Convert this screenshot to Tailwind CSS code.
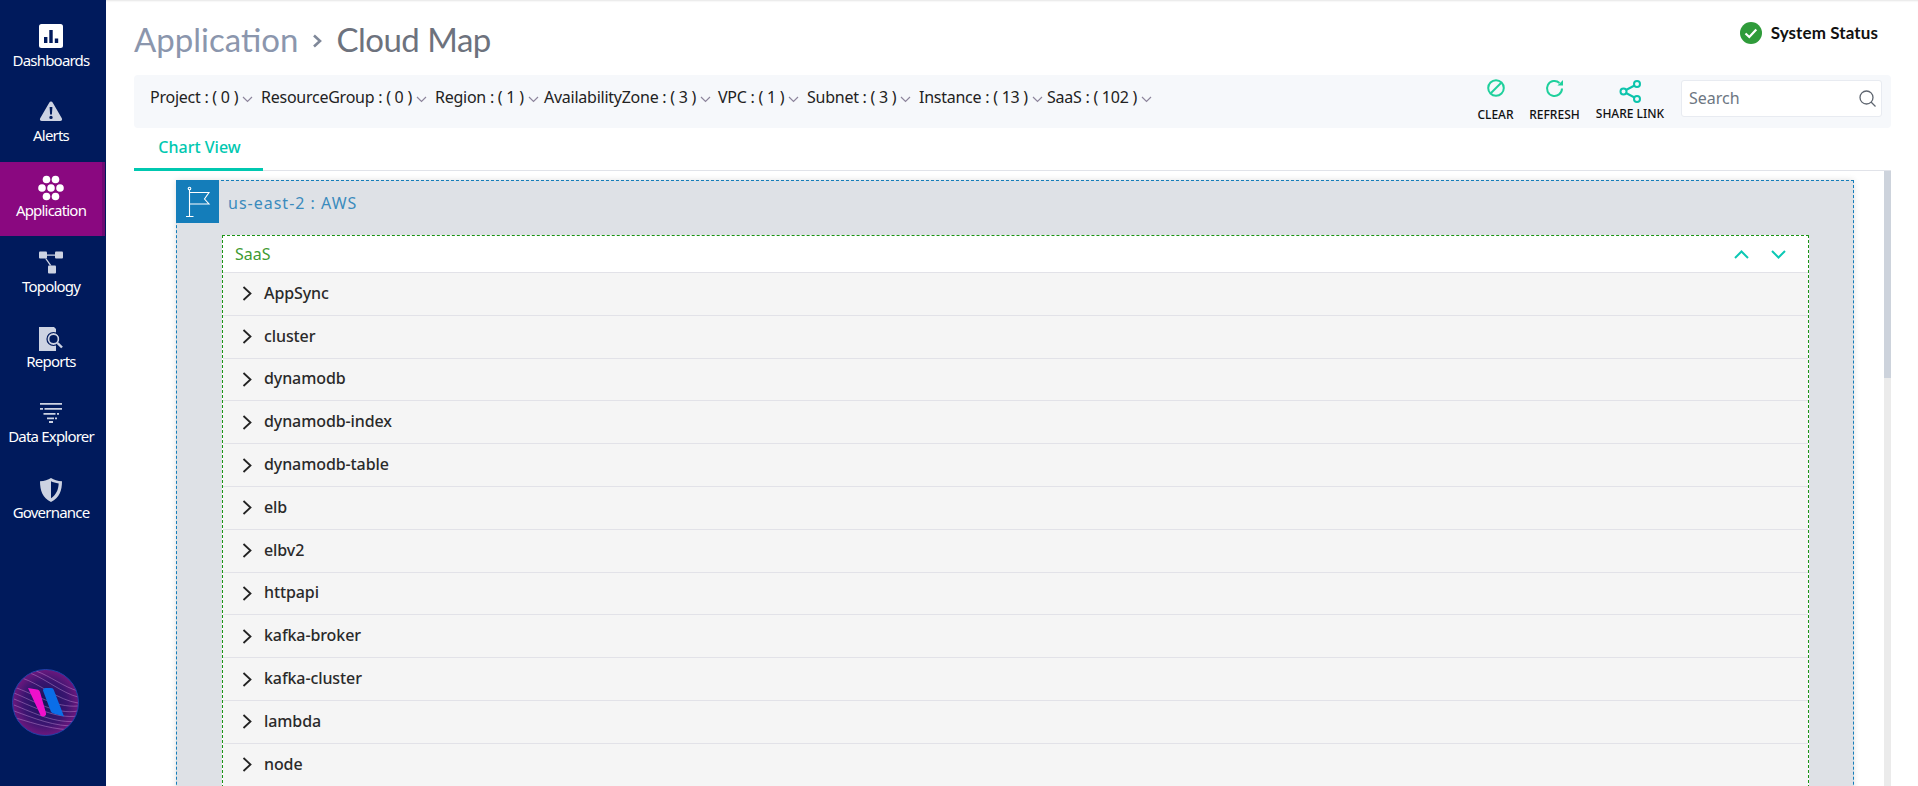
<!DOCTYPE html>
<html lang="en">
  <head>
    <meta charset="UTF-8" />
    <title>Cloud Map</title>
    <script src="https://cdn.jsdelivr.net/npm/@tailwindcss/browser@4"></script>
  </head>
  <body class="h-screen overflow-hidden bg-white font-['Noto_Sans',sans-serif] text-[#222]">
    <div class="flex h-[786px]">
      <!-- Sidebar -->
      <aside class="w-[106px] shrink-0 bg-[#001a5c] pt-[11px] flex flex-col text-white text-[15px] tracking-[-0.8px]">
        <a class="h-[75.4px] pr-[4px] flex flex-col items-center pt-[13px]">
          <svg class="w-6 h-6" viewBox="0 0 24 24"><rect width="24" height="24" rx="2.5" fill="#fff"/><path d="M5 13h3.400v6H5zM10.300 6h3.400v13h-3.400zM15.800 14.500h3.400V19h-3.400z" fill="#001a5c"/></svg>
          <span class="leading-[24px]">Dashboards</span>
        </a>
        <a class="h-[75.4px] pr-[4px] flex flex-col items-center pt-[13px]">
          <svg class="w-6 h-6" viewBox="0 0 24 24"><path d="M12 2.500c.8 0 1.300.4 1.800 1.200l9 15.500c.8 1.400-.1 2.800-1.600 2.800H2.800c-1.500 0-2.400-1.400-1.600-2.800l9-15.500c.5-.8 1-1.200 1.800-1.200z" fill="#cdd3e2"/><path d="M10.600 8h2.800l-.5 7.500h-1.800zM12 16.700a1.700 1.700 0 1 1 0 3.400 1.700 1.700 0 0 1 0-3.400z" fill="#001a5c"/></svg>
          <span class="leading-[24px]">Alerts</span>
        </a>
        <a class="h-[74px] mr-[1px] flex flex-col items-center pt-[13px] bg-[#8a0880] border-r-[3px] border-[#6e0a72]">
          <svg class="w-[26px] h-[26px]" viewBox="0 0 26 26" fill="#fff">
            <circle cx="8.500" cy="4.500" r="3.800"/><circle cx="17.500" cy="4.500" r="3.800"/>
            <circle cx="4" cy="13" r="3.800"/><circle cx="13" cy="13" r="3.800"/><circle cx="22" cy="13" r="3.800"/>
            <circle cx="8.500" cy="21.500" r="3.800"/><circle cx="17.500" cy="21.500" r="3.800"/>
          </svg>
          <span class="leading-[24px] -mt-[3px]">Application</span>
        </a>
        <a class="h-[75.400px] mt-[1.400px] pr-[4px] flex flex-col items-center pt-[14px]">
          <svg class="w-6 h-6" viewBox="0 0 24 24" fill="#cdd3e2"><rect y="0.500" width="8" height="7" rx="1"/><rect x="16" y="0.500" width="8" height="7" rx="1"/><rect x="9" y="14.500" width="8" height="8" rx="1"/><path d="M8 3.500h8v1.200H8zM6 7.500h1.500l5 7h-1.600z"/></svg>
          <span class="leading-[24px] -mt-[1px]">Topology</span>
        </a>
        <a class="h-[75.400px] pr-[4px] flex flex-col items-center pt-[14px]">
          <svg class="w-7 h-6 ml-[1px]" viewBox="0 0 28 24"><path d="M1 0h15l2 2v22H1z" fill="#cdd3e2"/><circle cx="15.500" cy="12" r="5.800" fill="#001a5c"/><circle cx="15.500" cy="12" r="5" fill="none" stroke="#cdd3e2" stroke-width="1.800"/><circle cx="15.500" cy="12" r="6.500" fill="none" stroke="#001a5c" stroke-width="1.200"/><path d="M19.500 16l4.500 4.500" stroke="#cdd3e2" stroke-width="2.400"/></svg>
          <span class="leading-[24px] -mt-[2px]">Reports</span>
        </a>
        <a class="h-[75.400px] pr-[4px] flex flex-col items-center pt-[15px]">
          <svg class="w-[22px] h-[20px]" viewBox="0 0 22 20" fill="#cdd3e2"><path d="M0 0h22v1.800H0zM0 5h3v1.800H0zM4.500 5H22v1.800H4.500zM3.500 10h12v1.800h-12zM17 10h2v1.800h-2zM7 14.500h7v1.800H7zM15 14.500h2v1.800h-2zM9 18h4v2H9z"/></svg>
          <span class="leading-[24px] mt-[1px]">Data Explorer</span>
        </a>
        <a class="h-[75.400px] pr-[4px] flex flex-col items-center pt-[15px]">
          <svg class="w-[22px] h-6" viewBox="0 0 22 24"><path d="M11 0c3 2 6.500 3 11 3.200 0 9-2.500 16.500-11 20.800C2.500 19.700 0 12.200 0 3.200 4.500 3 8 2 11 0z" fill="#cdd3e2"/><path d="M11 3.200c2 1 4.500 1.800 7.700 2.300-.3 6.500-2.700 11.500-7.700 14.700z" fill="#001a5c"/></svg>
          <span class="leading-[24px] -mt-[2px]">Governance</span>
        </a>
        <!-- Logo -->
        <div class="mt-auto mb-[50px] ml-[12px]">
          <svg class="w-[67px] h-[67px]" viewBox="0 0 67 67">
            <defs>
              <radialGradient id="lg" cx="0.500" cy="0.500" r="0.600"><stop offset="0" stop-color="#14145a"/><stop offset="0.550" stop-color="#3a1570"/><stop offset="1" stop-color="#8a1a86"/></radialGradient>
              <clipPath id="lc"><circle cx="33.500" cy="33.500" r="32.500"/></clipPath>
            </defs>
            <circle cx="33.500" cy="33.500" r="33" fill="url(#lg)" stroke="#2040a8" stroke-width="1"/>
            <g clip-path="url(#lc)" fill="none" stroke="#d7a8e8" stroke-opacity="0.550" stroke-width="0.700">
              <path d="M2 24c20 8 42 22 64 18M2 30c20 8 42 20 64 17M2 36c20 8 42 19 64 16M2 42c20 7 40 16 64 15M4 49c20 6 38 12 60 12M18 4c16 6 32 20 48 24M24 2c14 5 28 16 42 20M10 9c18 6 36 22 56 25M2 18c20 7 42 21 64 19"/>
            </g>
            <path d="M16 19l9 1.500c1.500.2 2.500 1 3 2.500l6 21c.5 2-1 3.500-3 3.500-1.500 0-2.500-.7-3-2.500z" fill="#ef10cb"/>
            <path d="M31 21.500c0-1.500 1-2.500 2.500-2.500h5.500c1.500 0 2.500.8 3 2.500l10 26-10.500-3c-1.500-.4-2.500-1.200-3-3z" fill="#0a6ee8"/>
          </svg>
        </div>
      </aside>

      <main class="flex-1 min-w-0 flex flex-col pl-[28px] pr-[27px] shadow-[inset_0_2px_2px_-1px_#e5e5e5]">
        <!-- Title row -->
        <div class="h-[75px] shrink-0 flex items-start justify-between">
          <h1 class="flex items-center mt-[18px] text-[33px] leading-[42px] font-['Lato',sans-serif] text-[#8b96ad]">
            <span>Application</span>
            <svg class="w-[10px] h-[14px] mx-[14px] mt-[3px]" viewBox="0 0 10 14" fill="none" stroke="#7f8899" stroke-width="2.600"><path d="M2 1.500L8 7l-6 5.500"/></svg>
            <span class="text-[#6d727d] tracking-[-0.5px]">Cloud Map</span>
          </h1>
          <div class="flex items-center gap-[9px] mt-[20px] mr-[13px]">
            <svg class="w-[22px] h-[22px]" viewBox="0 0 22 22"><circle cx="11" cy="11" r="11" fill="#2f9b3a"/><path d="M5.500 11.500l3.800 3.500 7-7.500" fill="none" stroke="#fff" stroke-width="2.200"/></svg>
            <span class="font-['Lato',sans-serif] font-bold text-[17px] tracking-[0.1px] text-[#111]">System Status</span>
          </div>
        </div>

        <!-- Filter bar -->
        <div class="h-[53px] shrink-0 bg-[#f6f8fb] rounded-[4px] flex items-start pl-[16px] pr-[9px] text-[16px] tracking-[-0.25px]">
          <div class="flex items-center gap-[8px] mt-[10px] leading-[24px] whitespace-nowrap">
            <span class="flex items-center w-[103px]">Project : ( 0 )<svg class="shrink-0 w-[11px] h-[7px] ml-[4px] mt-[4px]" viewBox="0 0 11 7" fill="none" stroke="#8d859c" stroke-width="1.200"><path d="M1 1l4.500 4.500L10 1"/></svg></span>
            <span class="flex items-center w-[166px]">ResourceGroup : ( 0 )<svg class="shrink-0 w-[11px] h-[7px] ml-[4px] mt-[4px]" viewBox="0 0 11 7" fill="none" stroke="#8d859c" stroke-width="1.200"><path d="M1 1l4.500 4.500L10 1"/></svg></span>
            <span class="flex items-center w-[101px]">Region : ( 1 )<svg class="shrink-0 w-[11px] h-[7px] ml-[4px] mt-[4px]" viewBox="0 0 11 7" fill="none" stroke="#8d859c" stroke-width="1.200"><path d="M1 1l4.500 4.500L10 1"/></svg></span>
            <span class="flex items-center w-[166px]">AvailabilityZone : ( 3 )<svg class="shrink-0 w-[11px] h-[7px] ml-[4px] mt-[4px]" viewBox="0 0 11 7" fill="none" stroke="#8d859c" stroke-width="1.200"><path d="M1 1l4.500 4.500L10 1"/></svg></span>
            <span class="flex items-center w-[81px]">VPC : ( 1 )<svg class="shrink-0 w-[11px] h-[7px] ml-[4px] mt-[4px]" viewBox="0 0 11 7" fill="none" stroke="#8d859c" stroke-width="1.200"><path d="M1 1l4.500 4.500L10 1"/></svg></span>
            <span class="flex items-center w-[104px]">Subnet : ( 3 )<svg class="shrink-0 w-[11px] h-[7px] ml-[4px] mt-[4px]" viewBox="0 0 11 7" fill="none" stroke="#8d859c" stroke-width="1.200"><path d="M1 1l4.500 4.500L10 1"/></svg></span>
            <span class="flex items-center w-[120px]">Instance : ( 13 )<svg class="shrink-0 w-[11px] h-[7px] ml-[4px] mt-[4px]" viewBox="0 0 11 7" fill="none" stroke="#8d859c" stroke-width="1.200"><path d="M1 1l4.500 4.500L10 1"/></svg></span>
            <span class="flex items-center">SaaS : ( 102 )<svg class="shrink-0 w-[11px] h-[7px] ml-[4px] mt-[4px]" viewBox="0 0 11 7" fill="none" stroke="#8d859c" stroke-width="1.200"><path d="M1 1l4.500 4.500L10 1"/></svg></span>
          </div>
          <div class="ml-auto flex items-start text-[12px] tracking-normal text-[#111] font-medium">
            <div class="w-[47px] flex flex-col items-center pt-[4px]">
              <svg class="w-[18px] h-[18px]" viewBox="0 0 18 18" fill="none" stroke="#1fd09c" stroke-width="2"><circle cx="9" cy="9" r="7.800"/><path d="M4 14L14 4"/></svg>
              <span class="mt-[10px] leading-[16px]">CLEAR</span>
            </div>
            <div class="w-[71px] flex flex-col items-center pt-[4px]">
              <svg class="w-[19px] h-[19px]" viewBox="0 0 19 19" fill="none" stroke="#1fd09c" stroke-width="2"><path d="M17 9.500a7.500 7.500 0 1 1-2.500-5.600"/><path d="M18 1v5.500h-5.500z" fill="#1fd09c" stroke="none"/></svg>
              <span class="mt-[9px] leading-[16px]">REFRESH</span>
            </div>
            <div class="w-[80px] flex flex-col items-center pt-[5px]">
              <svg class="w-[23px] h-[23px]" viewBox="0 0 23 23" fill="none" stroke="#0cc4ac" stroke-width="2"><circle cx="4.500" cy="11.500" r="3"/><circle cx="18" cy="4" r="3"/><circle cx="18" cy="19" r="3"/><path d="M7 10l8.500-4.500M7 13l8.500 4.500"/></svg>
              <span class="mt-[3px] leading-[16px]">SHARE LINK</span>
            </div>
            <div class="w-[201px] h-[37px] mt-[5px] ml-[11px] bg-white border border-[#e8ebf1] rounded-[3px] flex items-center justify-between pl-[7px] pr-[5px]">
              <span class="text-[16px] font-normal text-[#6d7682] -mt-[2px]">Search</span>
              <svg class="w-[17px] h-[17px]" viewBox="0 0 17 17" fill="none" stroke="#5f6670" stroke-width="1.300"><circle cx="7.500" cy="7.500" r="6.500"/><path d="M12 12l4.500 4.500"/></svg>
            </div>
          </div>
        </div>

        <!-- Tabs -->
        <div class="h-[43px] shrink-0 border-b border-[#e1e3e9] flex">
          <div class="w-[129px] h-[43px] pl-[2px] border-b-[3px] border-[#00c8b0] text-center text-[16px] font-medium leading-[38px] text-[#00c8b0]">Chart View</div>
        </div>

        <!-- Map area -->
        <div class="flex-1 min-h-0 flex overflow-hidden">
          <div class="flex-1 min-w-0 pl-[42px] pr-[30px] pt-[9px]">
            <div class="bg-[#dee1e6] border border-dashed border-[#147dba] shadow-[0_0_6px_rgba(0,0,0,0.12)] h-[700px]">
              <div class="flex h-[42px] items-start">
                <div class="w-[43px] h-[43px] -mt-[1px] -ml-[1px] bg-[#147dba] flex items-center justify-center">
                  <svg class="w-[26px] h-[32px]" viewBox="0 0 26 32" fill="none" stroke="#fff" stroke-width="1.100"><circle cx="4.500" cy="2.500" r="1.300"/><path d="M4.500 4v26M1 30.500h7.500M4.500 6.500h19.500l-4.500 6.500 4.500 5H4.500"/></svg>
                </div>
                <span class="ml-[9px] leading-[44px] text-[16px] tracking-[1px] text-[#3a8bbd]">us-east-2 : AWS</span>
              </div>
              <!-- SaaS panel -->
              <div class="ml-[45px] mr-[44px] mt-[12px] border border-dashed border-[#1a9414] bg-white">
                <div class="h-[36px] flex items-center justify-between pl-[12px] pr-[22px] text-[16px] text-[#3f9a33]">
                  <span>SaaS</span>
                  <div class="flex gap-[22px]">
                    <svg class="w-[15px] h-[9px]" viewBox="0 0 15 9" fill="none" stroke="#0cc8b4" stroke-width="2"><path d="M1 8l6.500-6.500L14 8"/></svg>
                    <svg class="w-[15px] h-[9px]" viewBox="0 0 15 9" fill="none" stroke="#0cc8b4" stroke-width="2"><path d="M1 1l6.500 6.500L14 1"/></svg>
                  </div>
                </div>
                <ul class="bg-[#f5f5f5] border-t border-[#e2e2e8] text-[16px] font-medium tracking-[-0.1px] leading-[24px] text-[#2a2a2a]">
                  <li class="h-[42.800px] pb-[2px] border-b border-[#e2e2e8] flex items-center pl-[19px]"><svg class="w-[10px] h-[15px] mr-[12px] mt-[2px]" viewBox="0 0 10 15" fill="none" stroke="#222" stroke-width="1.800"><path d="M1.500 1l7 6.500-7 6.500"/></svg>AppSync</li>
                  <li class="h-[42.800px] pb-[2px] border-b border-[#e2e2e8] flex items-center pl-[19px]"><svg class="w-[10px] h-[15px] mr-[12px] mt-[2px]" viewBox="0 0 10 15" fill="none" stroke="#222" stroke-width="1.800"><path d="M1.500 1l7 6.500-7 6.500"/></svg>cluster</li>
                  <li class="h-[42.800px] pb-[2px] border-b border-[#e2e2e8] flex items-center pl-[19px]"><svg class="w-[10px] h-[15px] mr-[12px] mt-[2px]" viewBox="0 0 10 15" fill="none" stroke="#222" stroke-width="1.800"><path d="M1.500 1l7 6.500-7 6.500"/></svg>dynamodb</li>
                  <li class="h-[42.800px] pb-[2px] border-b border-[#e2e2e8] flex items-center pl-[19px]"><svg class="w-[10px] h-[15px] mr-[12px] mt-[2px]" viewBox="0 0 10 15" fill="none" stroke="#222" stroke-width="1.800"><path d="M1.500 1l7 6.500-7 6.500"/></svg>dynamodb-index</li>
                  <li class="h-[42.800px] pb-[2px] border-b border-[#e2e2e8] flex items-center pl-[19px]"><svg class="w-[10px] h-[15px] mr-[12px] mt-[2px]" viewBox="0 0 10 15" fill="none" stroke="#222" stroke-width="1.800"><path d="M1.500 1l7 6.500-7 6.500"/></svg>dynamodb-table</li>
                  <li class="h-[42.800px] pb-[2px] border-b border-[#e2e2e8] flex items-center pl-[19px]"><svg class="w-[10px] h-[15px] mr-[12px] mt-[2px]" viewBox="0 0 10 15" fill="none" stroke="#222" stroke-width="1.800"><path d="M1.500 1l7 6.500-7 6.500"/></svg>elb</li>
                  <li class="h-[42.800px] pb-[2px] border-b border-[#e2e2e8] flex items-center pl-[19px]"><svg class="w-[10px] h-[15px] mr-[12px] mt-[2px]" viewBox="0 0 10 15" fill="none" stroke="#222" stroke-width="1.800"><path d="M1.500 1l7 6.500-7 6.500"/></svg>elbv2</li>
                  <li class="h-[42.800px] pb-[2px] border-b border-[#e2e2e8] flex items-center pl-[19px]"><svg class="w-[10px] h-[15px] mr-[12px] mt-[2px]" viewBox="0 0 10 15" fill="none" stroke="#222" stroke-width="1.800"><path d="M1.500 1l7 6.500-7 6.500"/></svg>httpapi</li>
                  <li class="h-[42.800px] pb-[2px] border-b border-[#e2e2e8] flex items-center pl-[19px]"><svg class="w-[10px] h-[15px] mr-[12px] mt-[2px]" viewBox="0 0 10 15" fill="none" stroke="#222" stroke-width="1.800"><path d="M1.500 1l7 6.500-7 6.500"/></svg>kafka-broker</li>
                  <li class="h-[42.800px] pb-[2px] border-b border-[#e2e2e8] flex items-center pl-[19px]"><svg class="w-[10px] h-[15px] mr-[12px] mt-[2px]" viewBox="0 0 10 15" fill="none" stroke="#222" stroke-width="1.800"><path d="M1.500 1l7 6.500-7 6.500"/></svg>kafka-cluster</li>
                  <li class="h-[42.800px] pb-[2px] border-b border-[#e2e2e8] flex items-center pl-[19px]"><svg class="w-[10px] h-[15px] mr-[12px] mt-[2px]" viewBox="0 0 10 15" fill="none" stroke="#222" stroke-width="1.800"><path d="M1.500 1l7 6.500-7 6.500"/></svg>lambda</li>
                  <li class="h-[42.800px] pb-[2px] border-b border-[#e2e2e8] flex items-center pl-[19px]"><svg class="w-[10px] h-[15px] mr-[12px] mt-[2px]" viewBox="0 0 10 15" fill="none" stroke="#222" stroke-width="1.800"><path d="M1.500 1l7 6.500-7 6.500"/></svg>node</li>
                </ul>
              </div>
            </div>
          </div>
          <!-- Scrollbar -->
          <div class="w-[7px] shrink-0 bg-[#ebebeb]">
            <div class="h-[207px] bg-[#cdd3dc]"></div>
          </div>
        </div>
      </main>
    </div>
  </body>
</html>
